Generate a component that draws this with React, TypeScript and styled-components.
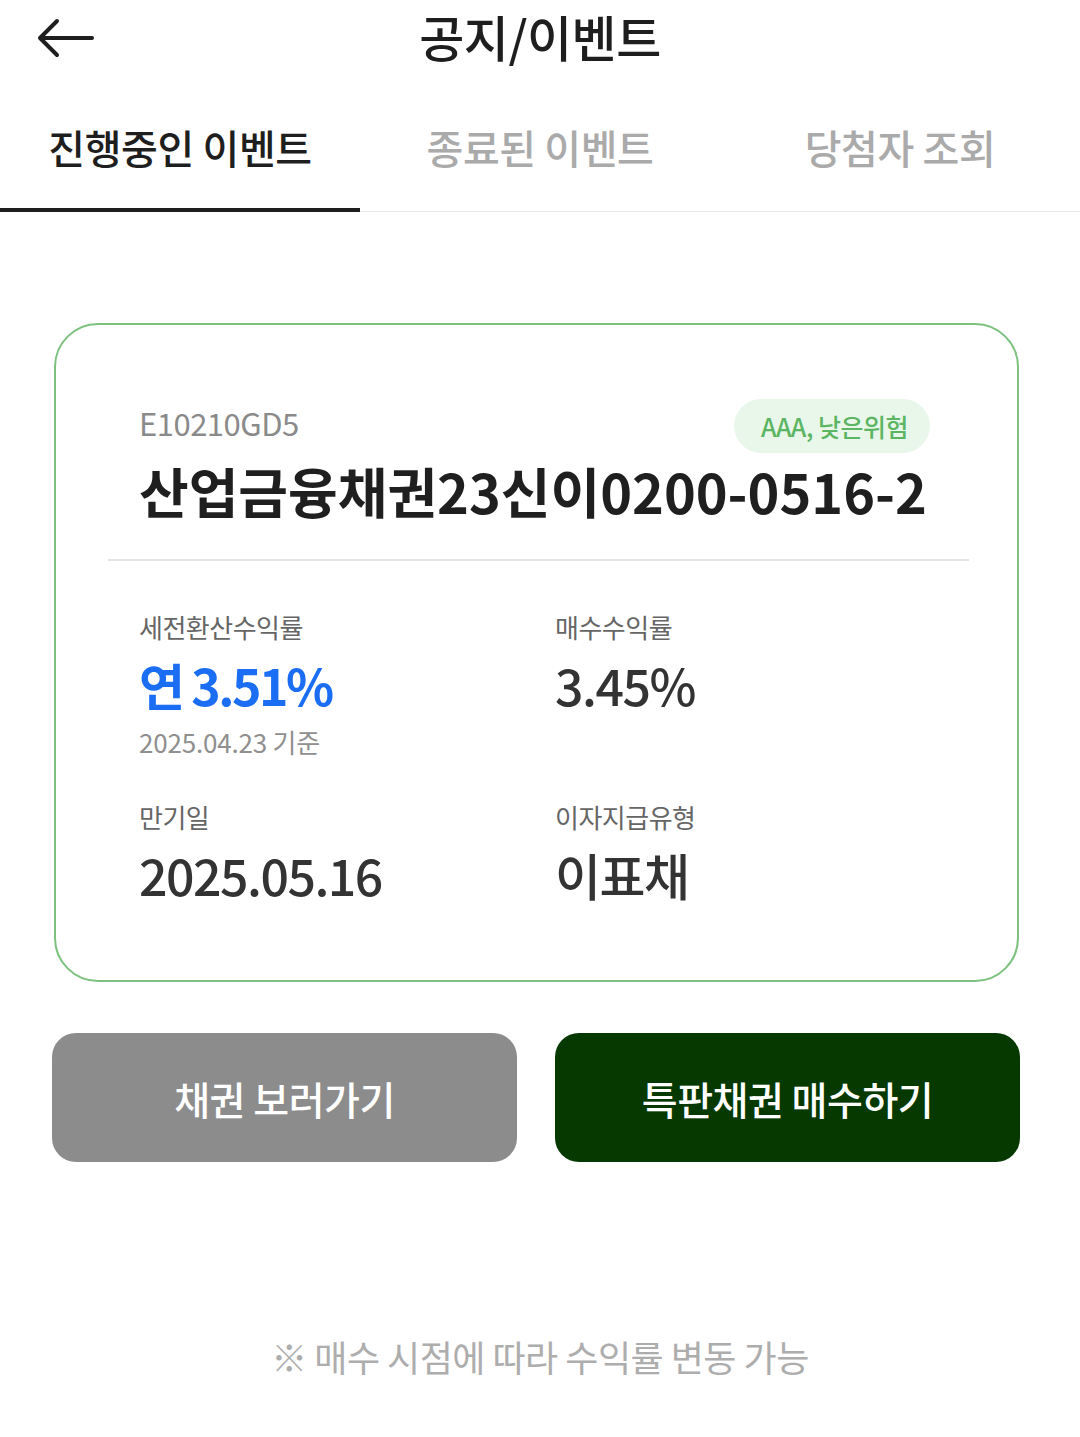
import styled, { createGlobalStyle } from 'styled-components'

const GlobalStyle = createGlobalStyle`
  html, body {
    margin: 0;
    padding: 0;
    background: #ffffff;
  }
  body {
    font-family: 'Noto Sans CJK KR', 'Noto Sans', sans-serif;
    color: #222222;
  }
  * {
    box-sizing: border-box;
  }
`

const Page = styled('div')`
  width: 1080px;
  min-height: 1437px;
  display: flex;
  flex-direction: column;
`

const Header = styled('header')`
  height: 70px;
  display: grid;
  grid-template-columns: 120px 1fr 120px;
  align-items: center;
`

const BackButton = styled('button')`
  border: none;
  background: none;
  padding: 5px 0 0 36px;
  height: 100%;
  display: flex;
  align-items: center;
  cursor: pointer;
`

const HeaderTitle = styled('h1')`
  margin: 0;
  text-align: center;
  font-size: 49px;
  font-weight: 500;
  color: #1e1e1e;
  letter-spacing: -0.5px;
`

const Tabs = styled('nav')`
  display: flex;
  margin-top: 34px;
  border-bottom: 1px solid #e6e6e6;
`

const Tab = styled('div')<{ $active?: boolean }>`
  flex: 1;
  height: 108px;
  display: flex;
  align-items: center;
  justify-content: center;
  padding-bottom: 18px;
  font-size: 40px;
  font-weight: 500;
  letter-spacing: -0.4px;
  color: ${(p) => (p.$active ? '#1e1e1e' : '#aaaaaa')};
  border-bottom: 4px solid ${(p) => (p.$active ? '#1e1e1e' : 'transparent')};
  margin-bottom: -1px;
`

const Content = styled('main')`
  padding: 111px 60px 0 52px;
  display: flex;
  flex-direction: column;
`

const Card = styled('section')`
  margin: 0 1px 0 2px;
  border: 2px solid #7cc27e;
  border-radius: 44px;
  padding: 74px 48px 71px 52px;
`

const CardHead = styled('div')`
  padding: 0 39px 0 31px;
`

const CodeRow = styled('div')`
  display: flex;
  align-items: center;
  justify-content: space-between;
  height: 54px;
`

const Code = styled('span')`
  font-size: 31px;
  padding-bottom: 8px;
  color: #8a8a8a;
  letter-spacing: -0.5px;
`

const Badge = styled('span')`
  height: 54px;
  padding: 0 22px 0 27px;
  border-radius: 27px;
  background: #e9f7eb;
  color: #5cb562;
  font-size: 25px;
  font-weight: 500;
  display: flex;
  align-items: center;
  letter-spacing: -0.5px;
`

const BondName = styled('h2')`
  margin: -2px -20px 0 0;
  font-size: 54px;
  font-weight: 700;
  color: #1f1f1f;
  letter-spacing: 0;
  line-height: 80px;
  white-space: nowrap;
`

const Divider = styled('hr')`
  border: none;
  border-top: 2px solid #e4e4e4;
  margin: 28px 0 48px;
`

const InfoGrid = styled('div')`
  display: grid;
  grid-template-columns: 416px 1fr;
  row-gap: 39px;
  padding-left: 31px;
`

const InfoItem = styled('div')`
  display: flex;
  flex-direction: column;
`

const Label = styled('span')`
  font-size: 26px;
  line-height: 36px;
  color: #666666;
  letter-spacing: -0.5px;
`

const Value = styled('span')<{ $accent?: boolean }>`
  font-size: 50px;
  line-height: 70px;
  margin-top: 4px;
  font-weight: ${(p) => (p.$accent ? 700 : 500)};
  color: ${(p) => (p.$accent ? '#1b6ef3' : '#333333')};
  letter-spacing: ${(p) => (p.$accent ? '-2.5px' : '-1.5px')};
`

const Note = styled('span')`
  margin-top: 5px;
  font-size: 26px;
  line-height: 36px;
  color: #8f8f8f;
  letter-spacing: -0.2px;
`

const ButtonRow = styled('div')`
  display: grid;
  grid-template-columns: 1fr 1fr;
  column-gap: 38px;
  margin-top: 51px;
`

const ActionButton = styled('button')<{ $primary?: boolean }>`
  height: 129px;
  border: none;
  border-radius: 24px;
  background: ${(p) => (p.$primary ? '#063900' : '#8c8c8c')};
  color: #ffffff;
  font-family: 'Noto Sans CJK KR', 'Noto Sans', sans-serif;
  font-size: 39px;
  font-weight: 500;
  letter-spacing: -0.5px;
  cursor: pointer;
`

const Footnote = styled('p')`
  margin: 168px 0 0;
  text-align: center;
  font-size: 36px;
  color: #adadad;
  letter-spacing: -0.5px;
  padding-left: 8px;
`

const ArrowLeft = () => (
  <svg width="58" height="40" viewBox="0 0 58 40" fill="none">
    <path
      d="M56 20H4M21 3L4 20l17 17"
      stroke="#1e1e1e"
      strokeWidth="4"
      strokeLinecap="round"
      strokeLinejoin="round"
    />
  </svg>
)

const TABS = ['진행중인 이벤트', '종료된 이벤트', '당첨자 조회']

const App = () => {
  return (
    <>
      <GlobalStyle />
      <Page>
        <Header>
          <BackButton aria-label="back">
            <ArrowLeft />
          </BackButton>
          <HeaderTitle>공지/이벤트</HeaderTitle>
          <div />
        </Header>

        <Tabs>
          {TABS.map((tab, i) => (
            <Tab key={tab} $active={i === 0}>
              {tab}
            </Tab>
          ))}
        </Tabs>

        <Content>
          <Card>
            <CardHead>
              <CodeRow>
                <Code>E10210GD5</Code>
                <Badge>AAA, 낮은위험</Badge>
              </CodeRow>
              <BondName>산업금융채권23신이0200-0516-2</BondName>
            </CardHead>
            <Divider />
            <InfoGrid>
              <InfoItem>
                <Label>세전환산수익률</Label>
                <Value $accent>연 3.51%</Value>
                <Note>2025.04.23 기준</Note>
              </InfoItem>
              <InfoItem>
                <Label>매수수익률</Label>
                <Value>3.45%</Value>
              </InfoItem>
              <InfoItem>
                <Label>만기일</Label>
                <Value>2025.05.16</Value>
              </InfoItem>
              <InfoItem>
                <Label>이자지급유형</Label>
                <Value>이표채</Value>
              </InfoItem>
            </InfoGrid>
          </Card>

          <ButtonRow>
            <ActionButton>채권 보러가기</ActionButton>
            <ActionButton $primary>특판채권 매수하기</ActionButton>
          </ButtonRow>

          <Footnote>※ 매수 시점에 따라 수익률 변동 가능</Footnote>
        </Content>
      </Page>
    </>
  )
}

export default App
